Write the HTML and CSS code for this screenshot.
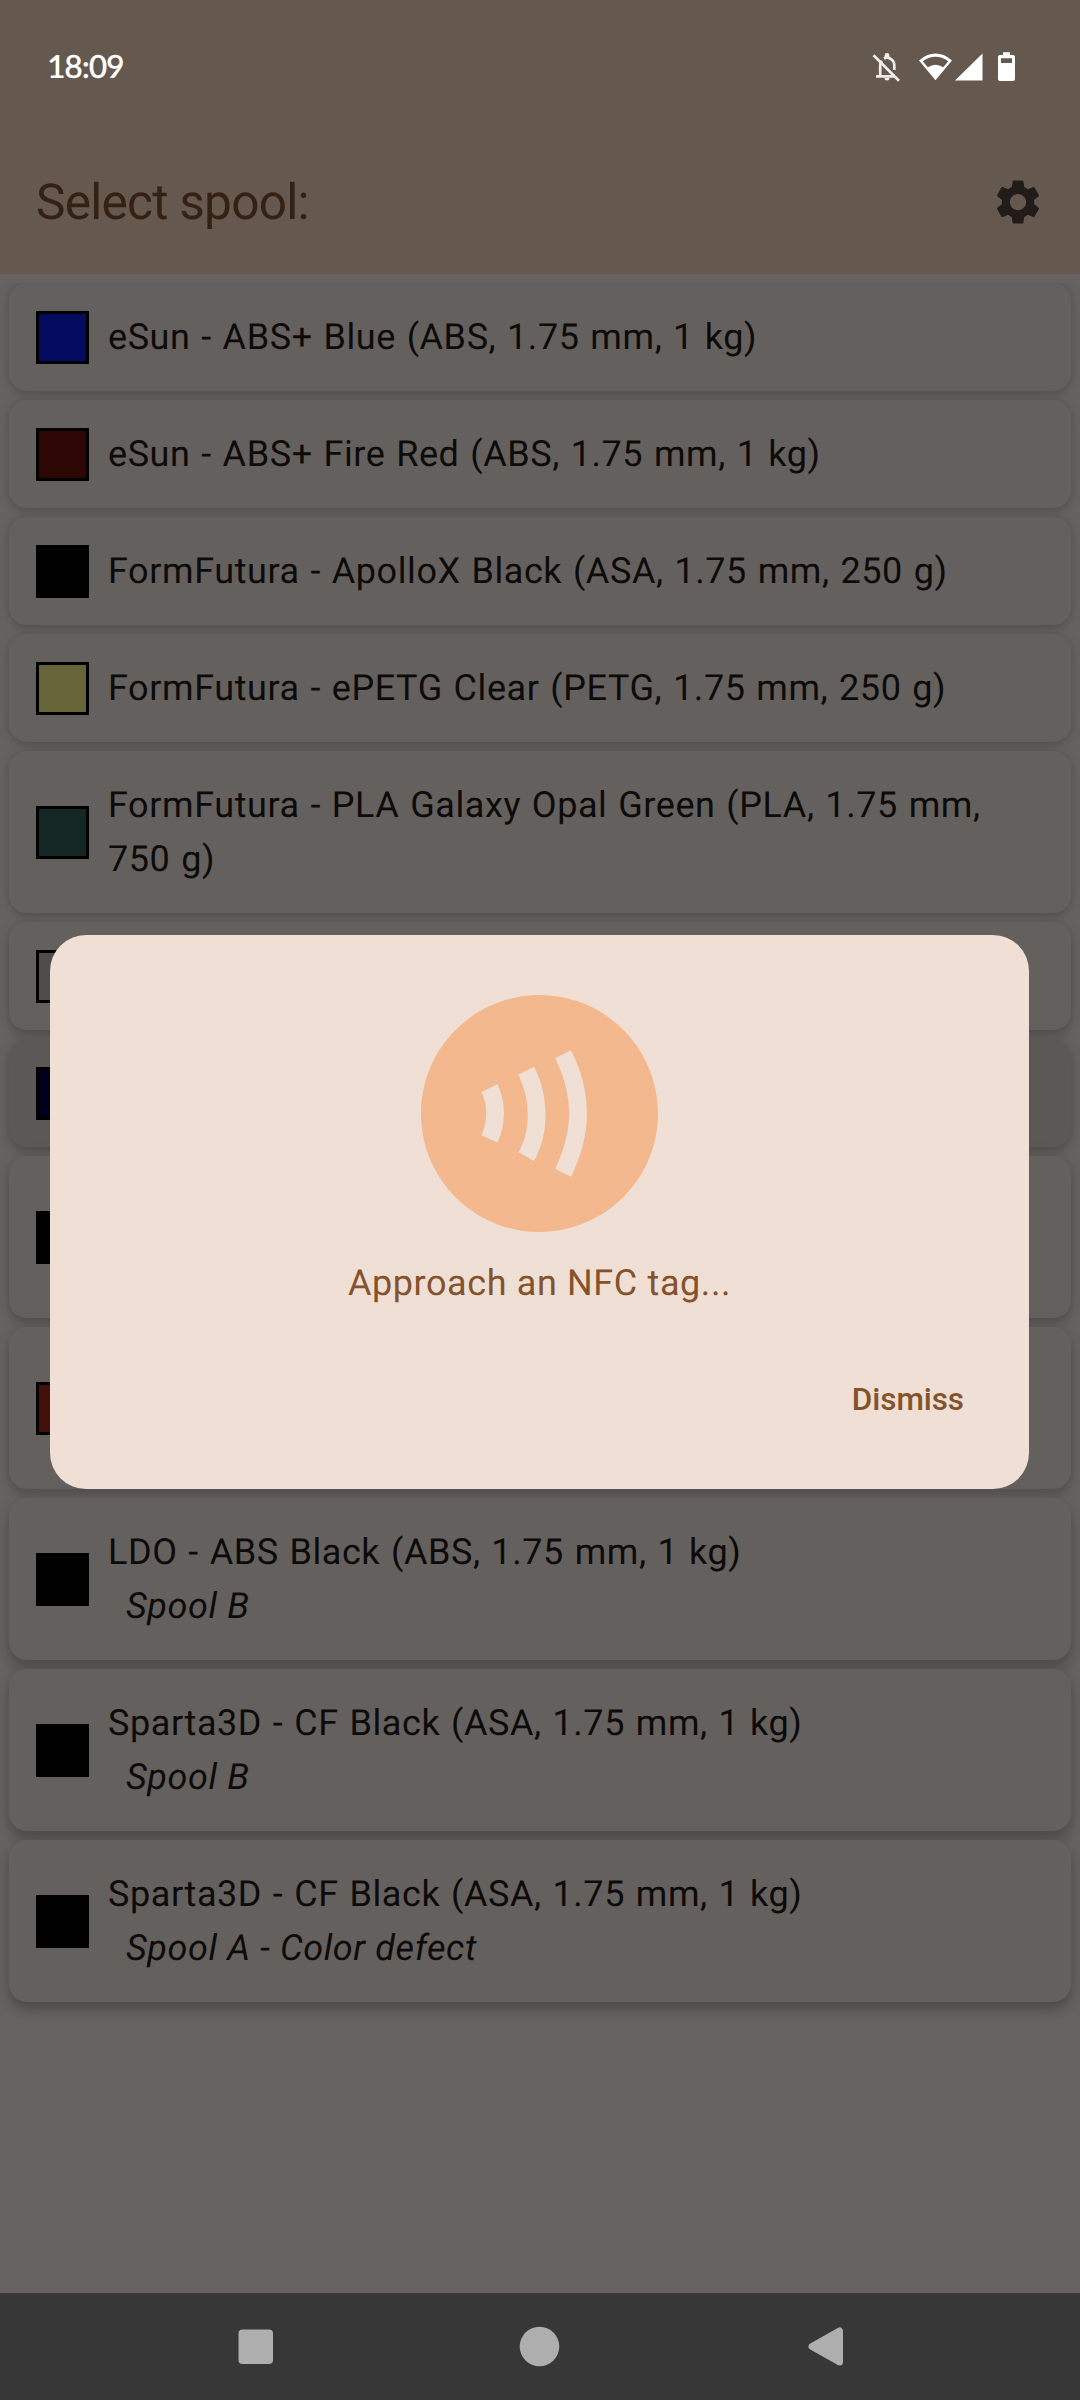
FILE: index.html
```html
<!DOCTYPE html>
<html lang="en">
<head>
<meta charset="utf-8">
<title>Select spool</title>
<link rel="stylesheet" href="styles.css">
</head>
<body>
<div class="screen">
  <header class="header">
    <div class="status">
      <span class="clock">18:09</span>
      <svg class="status-icons" width="144" height="32" viewBox="0 0 144 32" fill="#fff">
        <g fill="none" stroke="#f0eeed" stroke-width="2.7">
          <path d="M1.500 3.200 27 28.800"/>
          <path d="M4 24.400H23"/>
          <path d="M8.200 24V13.500q0-2.600 1.600-4.800M12 6.500Q15 4.800 18 6.500Q22.300 8.500 22.300 13.500V18"/>
        </g>
        <path d="M12.600 5V3.500a2.400 2.400 0 0 1 4.800 0V5zM12.500 26h5a2.500 2.500 0 0 1-5 0z" fill="#f0eeed"/>
        <path fill-rule="evenodd" d="M47 8.500Q54.500 1.500 63.500 1.500T80 8.500L63.500 28.300zM50.700 9.200 55.800 15.300Q63.500 10.200 71.200 15.300L76.300 9.200Q63.500 .300 50.700 9.200z"/>
        <path d="M83 28.500 110.500 1.500V28.500z"/>
        <path fill-rule="evenodd" d="M131 3V.200h7V3h3q2 0 2 2v22q0 2-2 2h-13q-2 0-2-2V5q0-2 2-2zM129 6.200v4.800h11V6.200z"/>
      </svg>
    </div>
    <div class="toolbar">
      <h1 class="title">Select spool:</h1>
      <svg class="gear" width="54" height="54" viewBox="0 0 24 24"><path d="M19.140 12.940c.040-.300.060-.610.060-.940 0-.320-.020-.640-.070-.940l2.030-1.580c.180-.140.230-.410.120-.610l-1.920-3.320c-.120-.220-.370-.290-.590-.220l-2.390.960c-.500-.380-1.030-.700-1.620-.940l-.360-2.540c-.040-.240-.240-.410-.480-.410h-3.840c-.240 0-.430.170-.470.410l-.360 2.540c-.590.240-1.130.570-1.620.940l-2.390-.960c-.220-.080-.470 0-.590.220L2.740 8.870c-.120.210-.080.470.120.610l2.030 1.580c-.050.300-.090.630-.090.940s.020.640.070.940l-2.030 1.580c-.180.140-.230.410-.120.610l1.920 3.320c.120.220.370.290.590.220l2.390-.960c.500.380 1.030.700 1.620.940l.360 2.540c.050.240.240.410.480.410h3.840c.240 0 .440-.170.470-.410l.360-2.540c.590-.240 1.130-.560 1.620-.940l2.390.960c.220.080.470 0 .590-.220l1.920-3.320c.120-.220.070-.470-.120-.610l-2.010-1.580zM12 15.600c-1.980 0-3.600-1.620-3.600-3.600s1.620-3.600 3.600-3.600 3.600 1.620 3.600 3.600-1.620 3.600-3.600 3.600z"/></svg>
    </div>
  </header>

  <main class="list">
    <div class="card"><i class="swatch blue"></i><div class="label">eSun - ABS+ Blue (ABS, 1.75 mm, 1 kg)</div></div>
    <div class="card"><i class="swatch fire-red"></i><div class="label">eSun - ABS+ Fire Red (ABS, 1.75 mm, 1 kg)</div></div>
    <div class="card"><i class="swatch"></i><div class="label">FormFutura - ApolloX Black (ASA, 1.75 mm, 250 g)</div></div>
    <div class="card"><i class="swatch clear"></i><div class="label">FormFutura - ePETG Clear (PETG, 1.75 mm, 250 g)</div></div>
    <div class="card tall"><i class="swatch green"></i><div class="label">FormFutura - PLA Galaxy Opal Green (PLA, 1.75 mm, 750 g)</div></div>
    <div class="card mid"><i class="swatch grey"></i></div>
    <div class="card mid selected"><i class="swatch navy"></i></div>
    <div class="card mid tall"><i class="swatch"></i></div>
    <div class="card mid tall"><i class="swatch red"></i></div>
    <div class="card low tall"><i class="swatch"></i><div class="label">LDO - ABS Black (ABS, 1.75 mm, 1 kg)<div class="note">Spool B</div></div></div>
    <div class="card low tall"><i class="swatch"></i><div class="label">Sparta3D - CF Black (ASA, 1.75 mm, 1 kg)<div class="note">Spool B</div></div></div>
    <div class="card low tall"><i class="swatch"></i><div class="label">Sparta3D - CF Black (ASA, 1.75 mm, 1 kg)<div class="note">Spool A - Color defect</div></div></div>
  </main>

  <nav class="navbar">
    <svg width="1080" height="107" viewBox="0 0 1080 107" fill="#aeaeae">
      <rect x="238.500" y="36.500" width="34.500" height="34.500" rx="4"/>
      <circle cx="539.500" cy="53.500" r="19.800"/>
      <path d="M812 53.500 839.500 38V69z" stroke="#aeaeae" stroke-width="7" stroke-linejoin="round"/>
    </svg>
  </nav>

  <section class="dialog">
    <svg class="nfc" width="237" height="237" viewBox="2 2 20 20"><path d="M12 2C6.480 2 2 6.480 2 12s4.480 10 10 10 10-4.480 10-10S17.520 2 12 2zM8.460 14.450L7.100 13.830c.280-.610.410-1.240.400-1.860-.010-.630-.140-1.240-.400-1.800l1.360-.630c.350.750.530 1.560.540 2.400.010.860-.170 1.700-.540 2.510zM11.530 16.010l-1.300-.740c.520-.920.780-1.980.780-3.150 0-1.190-.270-2.330-.800-3.400l1.340-.670c.640 1.280.960 2.650.960 4.070 0 1.430-.330 2.740-.980 3.890zM14.670 17.330l-1.350-.660c.780-1.600 1.180-3.180 1.180-4.690 0-1.510-.400-3.070-1.180-4.640l1.340-.670C15.560 8.450 16 10.230 16 11.980c0 1.740-.440 3.540-1.330 5.350z"/></svg>
    <p class="prompt">Approach an NFC tag...</p>
    <button class="dismiss">Dismiss</button>
  </section>
</div>
</body>
</html>
```
FILE: styles.css
```css
* { box-sizing: border-box; }

body {
  margin: 0;
  font-family: Roboto, sans-serif;
  text-rendering: geometricPrecision;
}

.screen {
  position: relative;
  display: flex;
  flex-direction: column;
  width: 1080px;
  height: 2400px;
  overflow: hidden;
  background: #666261;
}

.header {
  height: 274px;
  background: #64584f;
}

.status {
  display: flex;
  justify-content: space-between;
  height: 131px;
  padding: 52px 64px 0 47px;
}

.clock {
  color: #fff;
  font: 600 32px/32px Lato, sans-serif;
  letter-spacing: -1.2px;
  margin-top: -2px;
}

.toolbar {
  display: flex;
  align-items: center;
  justify-content: space-between;
  height: 143px;
  padding: 0 36px;
}

.title {
  margin: 0;
  padding-top: 1px;
  color: #352112;
  font-size: 49.5px;
  font-weight: 400;
  line-height: 63px;
  letter-spacing: -.72px;
}

.gear {
  margin-right: -0.5px;
  margin-bottom: 1px;
  fill: #211c19;
}

/* Shadows are clipped at the top edge of the scrolling area. */
.list {
  display: flex;
  flex: 1;
  flex-direction: column;
  gap: 9px;
  margin-top: 9px;
  padding: 0 9px;
  overflow: hidden;
}

.card {
  display: flex;
  flex: none;
  align-items: center;
  height: 108px;
  padding: 0 27px;
  gap: 19px;
  border-radius: 18px;
  background: #64605d;
  box-shadow: 0 3px 7px rgba(0, 0, 0, .12), 0 0 14px rgba(0, 10, 0, .1);
}

.tall { height: 162px; }
.mid { box-shadow: 0 5px 9px rgba(0, 0, 0, .15), 0 0 16px rgba(0, 10, 0, .1); }
.low { box-shadow: 0 8px 11px rgba(0, 0, 0, .18), 0 2px 18px rgba(0, 10, 0, .1); }
.selected { background: #5c5856; }

.swatch {
  flex: none;
  width: 53px;
  height: 53px;
  margin-top: 1px;
  border: 3px solid #000;
  background: #000;
}

.blue { background: #040c60; }
.fire-red { background: #2d0704; }
.clear { background: #666438; }
.green { background: #152725; }
.grey { background: #4d4d4d; }
.navy { background: #00001c; }
.red { background: #43110a; }

.label {
  color: #0d0b0a;
  font-size: 36px;
  line-height: 54px;
  letter-spacing: .575px;
  word-spacing: 1.3px;
}

.note {
  padding-left: 18px;
  font-style: italic;
  word-spacing: .2px;
}

.navbar {
  height: 107px;
  background: #373737;
}

.navbar svg { display: block; }

.dialog {
  position: absolute;
  top: 935px;
  left: 50px;
  display: flex;
  flex-direction: column;
  align-items: center;
  width: 979px;
  height: 554px;
  padding-top: 60px;
  border-radius: 36px;
  background: #f0dfd5;
}

.nfc { fill: #f4b88f; }

.prompt {
  margin: 24px 0 0;
  color: #85532b;
  font-size: 36px;
  line-height: 54px;
  letter-spacing: .575px;
  word-spacing: .2px;
}

.dismiss {
  align-self: flex-end;
  margin: 67px 65px 0 0;
  padding: 0;
  border: 0;
  background: none;
  color: #85532b;
  font: 500 31.5px/45px Roboto, sans-serif;
  letter-spacing: -.08px;
}
```
